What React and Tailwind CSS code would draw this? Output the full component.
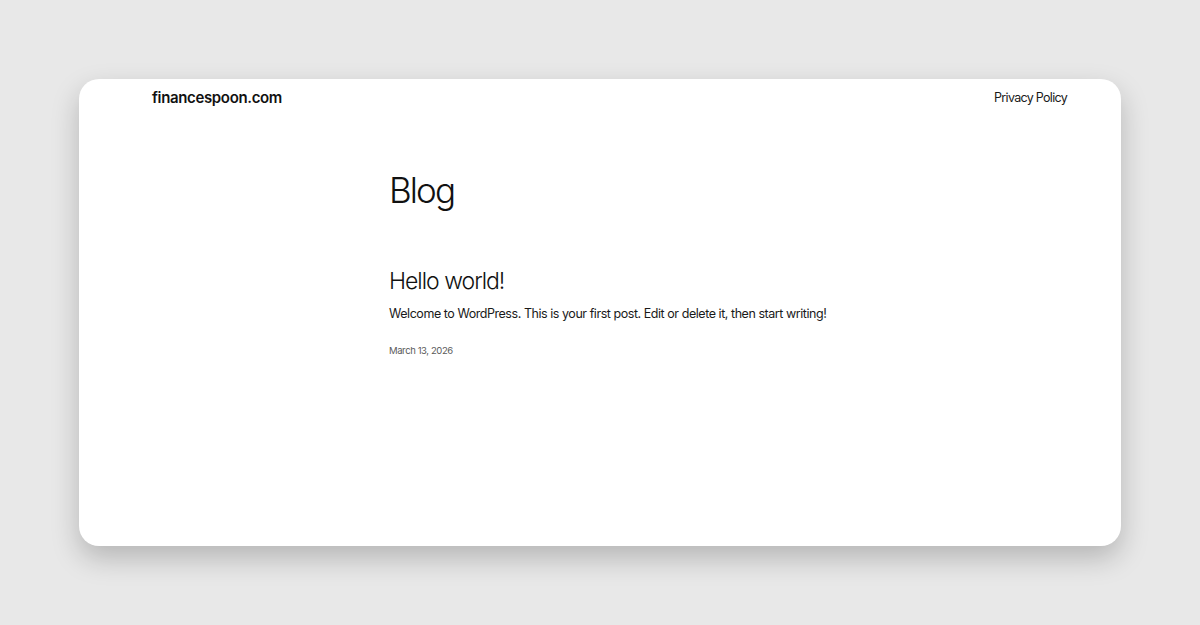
import React from "react";

export default function App() {
  return (
    <div className="w-[1200px] h-[625px] bg-[#e8e8e8] p-[79px] font-['Inter','Noto_Sans',sans-serif] text-[#111111]">
      <div className="h-full bg-white rounded-[20px] shadow-[0_12px_28px_rgba(0,0,0,0.22)] flex flex-col">
        {/* header */}
        <header className="flex items-center justify-between pl-[73px] pr-[54px] h-[38px] pt-[1px]">
          <span className="text-[15px] font-semibold tracking-[-0.35px]">financespoon.com</span>
          <span className="text-[12.5px] tracking-[-0.7px] text-[#1a1a1a]">Privacy Policy</span>
        </header>

        {/* main */}
        <main className="pl-[310px] pt-[56px]">
          <h1 className="text-[35px] leading-none tracking-[-1.9px] font-[350]">Blog</h1>
          <h2 className="mt-[62px] text-[23px] leading-none tracking-[-1px] font-[350]">Hello world!</h2>
          <p className="mt-[15px] text-[12.5px] leading-none tracking-[-0.45px] text-[#1a1a1a]">
            Welcome to WordPress. This is your first post. Edit or delete it, then start writing!
          </p>
          <p className="mt-[25px] text-[9.5px] leading-none tracking-[-0.4px] text-[#5a5a5a]">March 13, 2026</p>
        </main>
      </div>
    </div>
  );
}
